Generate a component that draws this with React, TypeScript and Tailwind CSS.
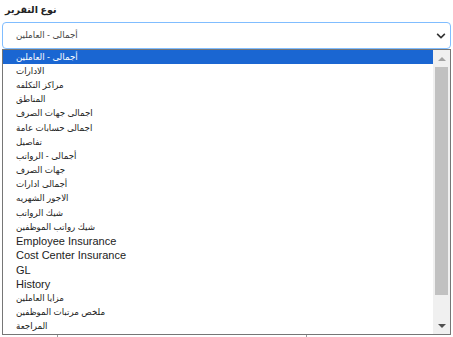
import { FaChevronDown } from "react-icons/fa";

const items = [
  "أجمالى - العاملين",
  "الادارات",
  "مراكز التكلفه",
  "المناطق",
  "اجمالى جهات الصرف",
  "اجمالى حسابات عامة",
  "تفاصيل",
  "أجمالى - الرواتب",
  "جهات الصرف",
  "أجمالى ادارات",
  "الاجور الشهريه",
  "شيك الرواتب",
  "شيك رواتب الموظفين",
  "Employee Insurance",
  "Cost Center Insurance",
  "GL",
  "History",
  "مزايا العاملين",
  "ملخص مرتبات الموظفين",
  "المراجعة",
];

const isArabic = (s: string) => /[\u0600-\u06FF]/.test(s);

function ReportList() {
  return (
    <div className="mx-[2px] flex h-[286px] border border-[#767676] bg-white">
      <ul className="flex-1">
        {items.map((item, i) => (
          <li
            key={item}
            className={`flex h-[14.2px] items-center pl-[13px] whitespace-nowrap ${
              isArabic(item) ? "text-[8.7px]" : "text-[11px]"
            } ${i === 0 ? "bg-[#1a66d2] text-white" : "text-[#222]"}`}
          >
            {item}
          </li>
        ))}
      </ul>
      <div className="flex w-[17px] flex-col bg-[#f0f0f0]">
        <div className="flex h-[17px] items-center justify-center">
          <span className="h-0 w-0 border-x-[4px] border-b-[4px] border-x-transparent border-b-[#a3a3a3]" />
        </div>
        <div className="mx-[2px] h-[228px] bg-[#c1c1c1]" />
        <div className="flex-1" />
        <div className="flex h-[17px] items-center justify-center">
          <span className="h-0 w-0 border-x-[4px] border-t-[4px] border-x-transparent border-t-[#505050]" />
        </div>
      </div>
    </div>
  );
}

export default function App() {
  return (
    <div
      className="h-[337px] w-[453px] overflow-hidden bg-white text-[#333]"
      style={{ fontFamily: '"Liberation Sans", "DejaVu Sans", sans-serif' }}
    >
      <div className="flex h-[22px] items-start pt-[2px] pl-[5px] text-[9.5px] leading-[16px] font-bold text-[#222]">
        نوع التقرير
      </div>
      <div className="mx-[2px] flex h-[27px] items-center rounded-[4px] border border-[#80bdff] bg-white pr-[4px] pl-[13px] text-[8.7px] text-[#444]">
        <span className="flex-1">أجمالى - العاملين</span>
        <FaChevronDown className="h-[10px] w-[10px] text-[#333]" />
      </div>
      <ReportList />
      <div className="relative h-[3px]">
        <div className="absolute top-0 left-[57px] h-[3px] w-px bg-[#999]" />
        <div className="absolute top-0 left-[306px] h-[3px] w-px bg-[#999]" />
      </div>
    </div>
  );
}
